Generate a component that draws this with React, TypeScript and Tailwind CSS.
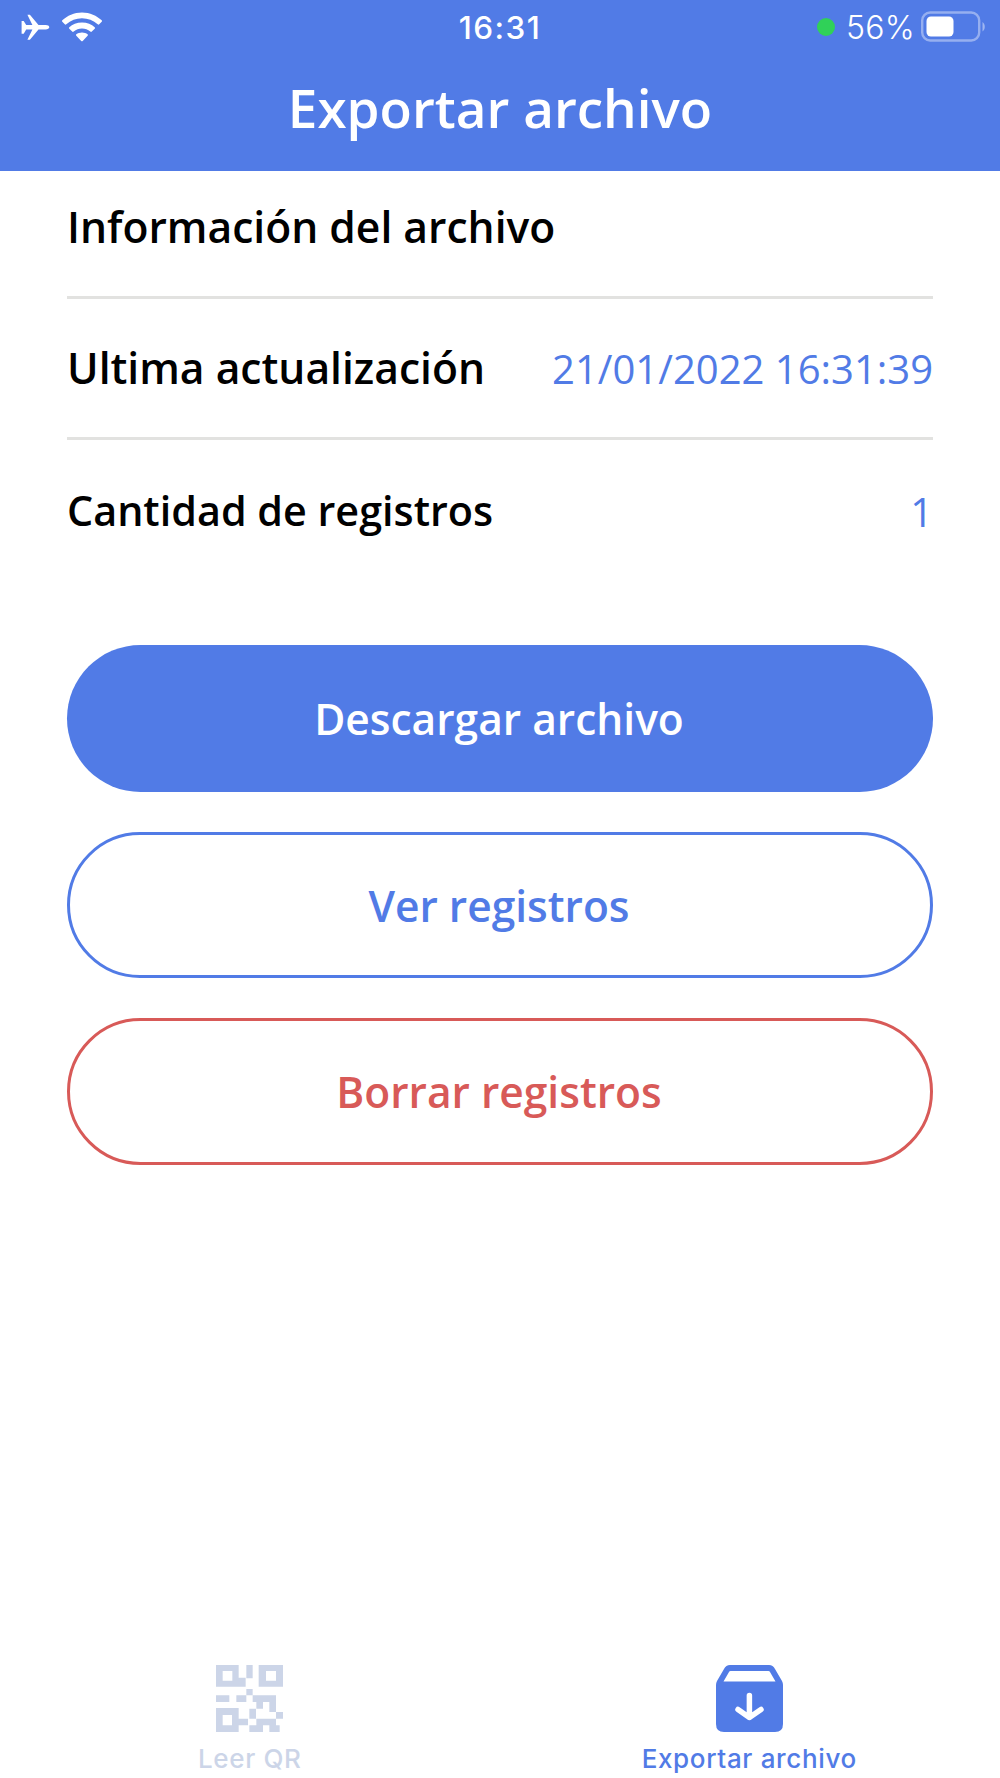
import type { ReactNode } from 'react';

interface InfoRowProps {
    label: string;
    value?: string;
    className?: string;
    labelClassName?: string;
}

interface ActionButtonProps {
    children: ReactNode;
    className: string;
}

function StatusBar() {
    return (
        <div className="grid h-[54px] grid-cols-3 items-center font-['Inter',sans-serif] text-white">
            <div className="flex items-center">
                <svg viewBox="0 0 110 54" className="h-[54px] w-[110px]" fill="white">
                    <path d="M21.6 21h2.1l2.5 4.1h6.2L27.4 14.7h2.5l8.6 10.4h7.2c2 0 3.6.9 3.6 2.1s-1.6 2.2-3.6 2.2h-7.2l-8.6 10.3h-2.5l5-10.3h-6.2l-2.5 4.4h-2.1z" />
                    <path d="M82 12.5c7.9 0 14.7 3.2 19.7 7.8.5.5.5 1 0 1.5l-2.5 2.5c-.5.5-1 .5-1.5 0a23.5 23.5 0 0 0-31.4 0c-.5.5-1 .5-1.5 0l-2.5-2.5c-.5-.5-.5-1 0-1.5 5-4.6 11.8-7.8 19.7-7.8z" />
                    <path d="M82 22.5c5.2 0 9.6 1.9 12.7 4.7.5.5.5 1 0 1.5l-2.9 2.9c-.5.5-1 .4-1.5 0a12.500 12.500 0 0 0-16.600 0c-.5.4-1 .5-1.500 0l-2.900-2.900c-.5-.5-.5-1 0-1.500 3.100-2.800 7.500-4.700 12.700-4.700z" />
                    <path d="M82 32.5c2.300 0 4.200.7 5.600 1.800.5.5.5 1 0 1.500l-4.900 5.100c-.5.5-1 .5-1.500 0l-4.900-5.100c-.5-.5-.5-1 0-1.500 1.500-1.100 3.400-1.800 5.700-1.800z" />
                </svg>
            </div>
            <span className="pt-px text-center text-[31.5px] leading-none font-medium tracking-[1.4px]">16:31</span>
            <div className="flex items-center justify-end pr-[14px]">
                <span className="size-[17.5px] rounded-full bg-[#30d158]" />
                <span className="ml-[11px] pt-[2px] text-[32px] leading-none font-light tracking-[0.3px]">56%</span>
                <svg viewBox="0 0 65 32" className="ml-[6px] h-8 w-[65px]">
                    <rect x="1.2" y="1.500" width="57" height="28" rx="8" fill="none" stroke="white" strokeOpacity="0.4" strokeWidth="2.4" />
                    <rect x="5.5" y="5.500" width="27" height="20" rx="4.5" fill="white" />
                    <path d="M61.5 11c3 2 3 7.5 0 9.5z" fill="white" fillOpacity="0.45" />
                </svg>
            </div>
        </div>
    );
}

function InfoRow({ label, value, className = 'border-b-[3px] border-[#e2e2e0]', labelClassName = 'text-[42.6px]' }: InfoRowProps) {
    return (
        <div className={`flex h-[141px] items-center justify-between ${className}`}>
            <span className={`font-semibold text-black ${labelClassName}`}>{label}</span>
            {value && <span className="pt-[2px] text-[40px] text-[#517be6]">{value}</span>}
        </div>
    );
}

function ActionButton({ children, className }: ActionButtonProps) {
    return (
        <button className={`flex h-[146.5px] w-full items-center justify-center rounded-full pt-px pr-[2px] text-[42.5px] font-semibold ${className}`}>
            {children}
        </button>
    );
}

function QrIcon() {
    return (
        <svg viewBox="0 0 201 201" className="size-[67px]" fill="currentColor">
            <path
                fillRule="evenodd"
                d="M0 0h68v38h21v27H0zM20 18v29h29V18zM91 0h19v40H91zM128 0h73v65h-73zM150 18v29h30V18zM91 72h19v19H91zM0 91h40v20H0zM61 91h30v20H61zM110 91h70v50h-20v-30h-19v20h-20v-20h-11zM0 129h68v32h28v20H68v20H0zM20 150v31h28v-31zM100 131h20v30h-20zM180 141h21v20h-21zM121 161h59v20h11v20h-31v-20h-19v20h-41v-20h21z"
            />
        </svg>
    );
}

function ExportIcon() {
    return (
        <svg viewBox="0 0 67 67" className="size-[67px]">
            <path
                fill="currentColor"
                fillRule="evenodd"
                d="M14 0h39q4 0 6 4l7 12q1 2 1 4v39q0 8-8 8H8q-8 0-8-8V20q0-2 1-4L8 4q2-4 6-4zM14.5 6Q13.500 6 13 7L7.500 16.500h52L54 7Q53.500 6 52.500 6z"
            />
            <path d="M33.4 30.5v22M22 44.5l11.400 8L45 44.500" fill="none" stroke="white" strokeWidth="5.5" strokeLinecap="round" strokeLinejoin="round" />
        </svg>
    );
}

export default function App() {
    return (
        <div className="flex h-[1778px] w-[1000px] flex-col bg-white font-['Open_Sans',sans-serif]">
            <header className="h-[170.5px] bg-[#517be6]">
                <StatusBar />
                <h1 className="text-center text-[53px] leading-[108px] font-semibold text-white">Exportar archivo</h1>
            </header>

            <main className="flex-1 px-[67px]">
                <section className="-mt-[12.5px]">
                    <InfoRow label="Información del archivo" />
                    <InfoRow label="Ultima actualización" value="21/01/2022 16:31:39" />
                    <InfoRow label="Cantidad de registros" value="1" className="" labelClassName="text-[41.3px]" />
                </section>

                <section className="mt-[64.4px] flex flex-col gap-10">
                    <ActionButton className="bg-[#517be6] text-white">Descargar archivo</ActionButton>
                    <ActionButton className="border-[3px] border-[#517be6] text-[#517be6]">Ver registros</ActionButton>
                    <ActionButton className="border-[3px] border-[#d85a58] text-[#d85a58]">Borrar registros</ActionButton>
                </section>
            </main>

            <nav className="grid h-[113px] grid-cols-2 pr-px font-['Inter',sans-serif] text-[26px] leading-none font-medium tracking-[0.65px]">
                <div className="flex flex-col items-center gap-[14px] text-[#ccd5e8]">
                    <QrIcon />
                    <span>Leer QR</span>
                </div>
                <div className="flex flex-col items-center gap-[14px] text-[#517be6]">
                    <ExportIcon />
                    <span>Exportar archivo</span>
                </div>
            </nav>
        </div>
    );
}
